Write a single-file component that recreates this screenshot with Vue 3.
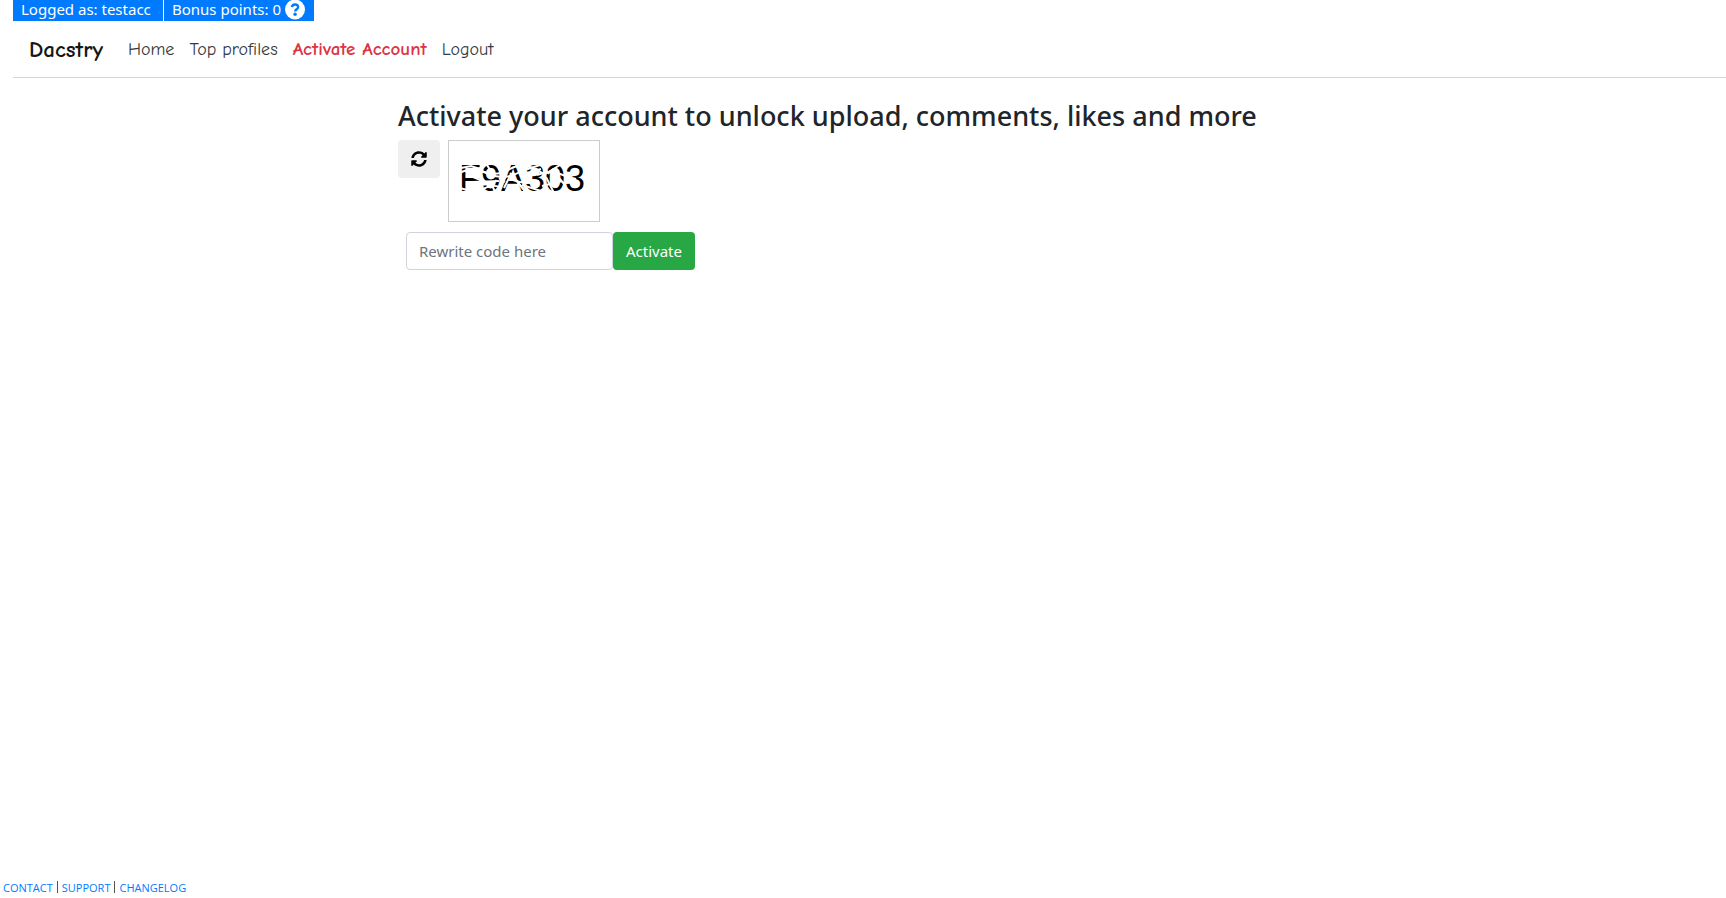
<script setup>
import { ref } from 'vue'

const code = ref('')
const scratches = [
  'M10 32 Q24 25 40 33 T76 28',
  'M12 27 L22 25 L34 29 M11 47 L18 49',
  'M20 33 L30 30 M23 41 L50 40',
  'M16 30 L32 27 M24 36 L34 40',
  'M30 29 Q46 37 61 28 T96 34',
  'M34 48 Q44 43 50 46',
  'M38 24 L43 32 M42 42 L47 53 M59 23 L50 52',
  'M50 37 L56 41 M61 32 L76 50',
  'M55 47 L62 33 M68 25 L72 31 M69 42 L80 54',
  'M64 39 Q76 44 90 40 M78 32 L92 28',
  'M73 30 L91 24 M73 44 L92 50',
  'M94 25 L100 33 M97 36 L105 52 M111 24 L96 33',
  'M93 45 L113 40 M104 30 L116 44',
  'M88 34 Q104 27 122 38 M116 35 L127 38'
]
</script>

<template>
  <div class="page">
    <header>
      <div class="status">
        <span class="tag">Logged as: testacc</span>
        <span class="tag points">
          <span>Bonus points: 0</span>
          <button class="help" type="button" aria-label="About bonus points">
            <svg viewBox="0 0 20 20" width="20" height="20" aria-hidden="true">
              <circle cx="10" cy="9.5" r="10" fill="#fff" />
              <path d="M6.8 7Q7.5 4.5 10 4.5Q13.1 4.5 13.1 7.1Q13.1 8.5 11.6 9.4Q10.2 10.2 10.2 11.4" fill="none" stroke="#007bff" stroke-width="2.4" />
              <circle cx="10.1" cy="14.2" r="1.7" fill="#007bff" />
            </svg>
          </button>
        </span>
      </div>
      <nav>
        <a class="brand" href="#">Dacstry</a>
        <a href="#">Home</a>
        <a href="#">Top profiles</a>
        <a class="alert" href="#">Activate Account</a>
        <a href="#">Logout</a>
      </nav>
    </header>

    <main>
      <h1>Activate your account to unlock upload, comments, likes and more</h1>
      <div class="challenge">
        <button class="refresh" type="button" aria-label="New code">
          <svg viewBox="0 0 512 512" width="16" height="16" aria-hidden="true">
            <path d="M370.72 133.28C339.458 104.008 298.888 87.962 255.848 88c-77.458.068-144.328 53.178-162.791 126.85-1.344 5.363-6.122 9.15-11.651 9.15H24.103c-7.498 0-13.194-6.807-11.807-14.176C33.933 94.924 134.813 8 256 8c66.448 0 126.791 26.136 171.315 68.685L463.03 40.97C478.149 25.851 504 36.559 504 57.941V192c0 13.255-10.745 24-24 24H345.941c-21.382 0-32.09-25.851-16.971-40.971l41.75-41.749zM32 296h134.059c21.382 0 32.09 25.851 16.971 40.971l-41.75 41.75c31.262 29.273 71.835 45.319 114.876 45.28 77.418-.07 144.315-53.144 162.787-126.849 1.344-5.363 6.122-9.15 11.651-9.15h57.304c7.498 0 13.194 6.807 11.807 14.176C478.067 417.076 377.187 504 256 504c-66.448 0-126.791-26.136-171.315-68.685L48.97 471.03C33.851 486.149 8 475.441 8 454.059V320c0-13.255 10.745-24 24-24z" />
          </svg>
        </button>
        <svg class="code" viewBox="0 0 150 80" width="150" height="80" role="img" aria-label="Code">
          <text x="10" y="50" font-size="36">F9A303</text>
          <path v-for="d in scratches" :key="d" :d="d" fill="none" stroke="#fff" stroke-width="2" />
        </svg>
      </div>
      <form @submit.prevent>
        <input v-model="code" type="text" placeholder="Rewrite code here" aria-label="Rewrite code here" />
        <button class="submit" type="submit">Activate</button>
      </form>
    </main>

    <footer>
      <a href="#">CONTACT</a><i></i><a href="#">SUPPORT</a><i></i><a href="#">CHANGELOG</a>
    </footer>
  </div>
</template>

<style>
body { margin: 0; background: #fff; }
</style>

<style scoped>
.page {
  min-height: 100vh;
  display: flex;
  flex-direction: column;
  box-sizing: border-box;
  font-family: "Segoe UI", "Noto Sans", sans-serif;
  font-size: 15px;
  color: #212529;
}
a { text-decoration: none; }
button { border: 0; font: inherit; cursor: pointer; }
header {
  margin-left: 13px;
  border-bottom: 1px solid #d6d6d6;
}
.status { display: flex; gap: 1px; height: 21px; }
.tag {
  box-sizing: border-box;
  width: 150px;
  padding-left: 8px;
  line-height: 19px;
  white-space: nowrap;
  color: #fff;
  background: #007bff;
}
.points { display: flex; align-items: flex-start; gap: 4px; }
.help { display: flex; padding: 0; background: none; }
nav {
  display: flex;
  align-items: center;
  gap: 15px;
  height: 56px;
  padding-left: 16px;
  font-family: "Comic Sans MS", "Comic Neue", "Open Sans", sans-serif;
  font-size: 18px;
}
nav a { color: #343a40; white-space: nowrap; }
nav .brand { margin-right: 10px; font-size: 23px; font-weight: 600; color: #161616; }
nav .alert { color: #dc3545; font-size: 19px; font-weight: 700; }
main { flex: 1; margin-left: 23%; padding-left: 1px; }
h1 {
  margin: 21px 0 7px;
  font-size: 27px;
  line-height: 34px;
  font-weight: 500;
}
.challenge { display: flex; align-items: flex-start; gap: 8px; }
.refresh {
  display: flex;
  align-items: center;
  justify-content: center;
  width: 42px;
  height: 38px;
  border-radius: 4px;
  background: #efefef;
}
.code {
  border: 1px solid #ccc;
  font-family: Arial, "Liberation Sans", sans-serif;
}
form { display: flex; margin: 10px 0 0 8px; }
input {
  box-sizing: border-box;
  width: 207px;
  height: 38px;
  padding: 0 12px;
  border: 1px solid #ced4da;
  border-radius: 4px;
  font: inherit;
}
input::placeholder { color: #6c757d; opacity: 1; }
.submit {
  width: 82px;
  height: 38px;
  padding: 0;
  border-radius: 4px;
  color: #fff;
  background: #28a745;
}
footer {
  display: flex;
  align-items: center;
  height: 12px;
  padding: 0 3px 5px;
  font-family: "Segoe UI", "Open Sans", sans-serif;
  font-size: 11px;
}
footer a { color: #007bff; }
footer i { width: 1px; height: 12px; margin: 0 4px; background: #555; }
</style>
